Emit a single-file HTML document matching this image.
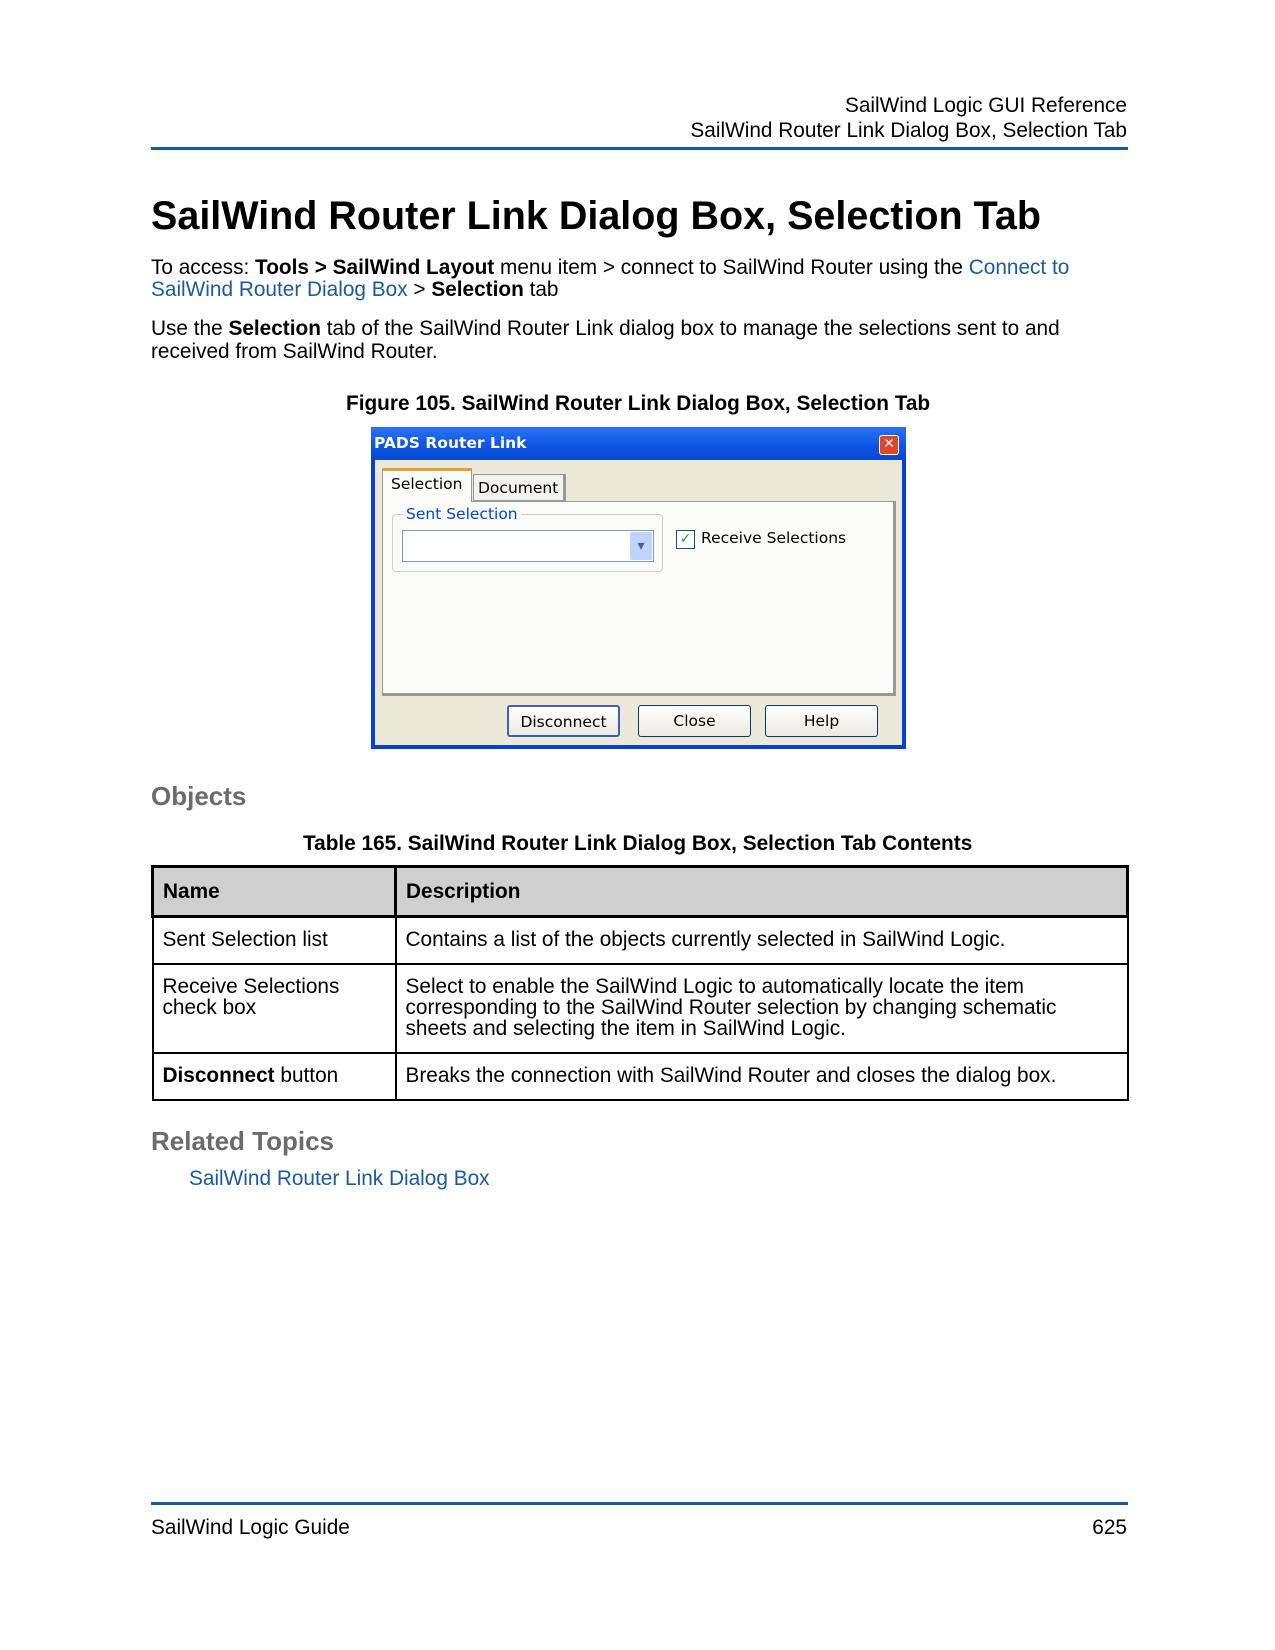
<!DOCTYPE html>
<html><head><meta charset="utf-8"><style>
body{margin:0;background:#fff;font-family:"Liberation Sans",Arial,sans-serif;color:#000}
.pg{position:relative;width:1275px;height:1650px;overflow:hidden}
.a{position:absolute;white-space:nowrap}
.lnk{color:#1a5a9e}
.t{font-size:20.8px}
.dlg{position:absolute;left:371px;top:427px;width:535px;height:322px;background:#0a3fd6;box-sizing:border-box}
.dlg *{position:absolute;box-sizing:border-box;font-family:"DejaVu Sans",sans-serif;white-space:nowrap}
.btn{top:278px;height:32px;border:1px solid #003c74;border-radius:3px;background:linear-gradient(#fff,#ece9e0);font-size:15.5px;text-align:center;line-height:30px;color:#000}
td{border:2px solid #000;padding:0 9px;vertical-align:top;font-size:20.8px}
</style></head><body><div class="pg">
<div class="a t" style="right:148px;top:94px">SailWind Logic GUI Reference</div>
<div class="a t" style="right:148px;top:119px">SailWind Router Link Dialog Box, Selection Tab</div>
<div class="a" style="left:151px;top:147px;width:977px;height:3px;background:#1a5a9e"></div>
<div class="a" style="left:151px;top:194px;font-size:39.5px;font-weight:bold">SailWind Router Link Dialog Box, Selection Tab</div>
<div class="a t" style="left:151px;top:256px">To access: <b>Tools &gt; SailWind Layout</b> menu item &gt; connect to SailWind Router using the <span class="lnk">Connect to</span></div>
<div class="a t" style="left:151px;top:278px"><span class="lnk">SailWind Router Dialog Box</span> &gt; <b>Selection</b> tab</div>
<div class="a t" style="left:151px;top:317px">Use the <b>Selection</b> tab of the SailWind Router Link dialog box to manage the selections sent to and</div>
<div class="a t" style="left:151px;top:340px">received from SailWind Router.</div>
<div class="a t" style="left:346px;top:392px;font-weight:bold">Figure 105. SailWind Router Link Dialog Box, Selection Tab</div>
<div class="dlg">
 <div style="left:0;top:0;width:535px;height:33px;background:linear-gradient(#2b72f2,#0b55e3 60%,#0a48d0)"></div>
 <div style="left:3px;top:7px;color:#fff;font-weight:bold;font-size:15.5px">PADS Router Link</div>
 <div style="left:508px;top:8px;width:20px;height:20px;background:#e0452a;border:1px solid #fff;border-radius:3px;color:#fff;font-size:14px;line-height:17px;text-align:center;font-weight:bold">✕</div>
 <div style="left:4px;top:33px;width:527px;height:285px;background:#ece9d8"></div>
 <div style="left:11px;top:74px;width:514px;height:195px;background:#fbfbf9;border:1px solid #919b9c;border-right:3px solid #9a9a90;border-bottom:3px solid #9a9a90"></div>
 <div style="left:11px;top:41px;width:90px;height:34px;background:#fbfbf9;border:1px solid #919b9c;border-bottom:none;border-top:3px solid #e0a040"></div>
 <div style="left:20px;top:48px;font-size:15.5px">Selection</div>
 <div style="left:102px;top:47px;width:93px;height:27px;background:#f4f3ee;border:1px solid #919b9c;border-right:3px solid #919b9c"></div>
 <div style="left:107px;top:52px;font-size:15.5px">Document</div>
 <div style="left:21px;top:87px;width:271px;height:58px;border:1px solid #d0d0bf;border-radius:4px"></div>
 <div style="left:32px;top:78px;background:#fbfbf9;padding:0 3px;font-size:15.5px;color:#0046d5">Sent Selection</div>
 <div style="left:31px;top:103px;width:252px;height:32px;border:1px solid #7f9db9;background:#fff"></div>
 <div style="left:259px;top:105px;width:22px;height:28px;background:#c1d3fb;border-radius:2px;color:#4d6185;font-size:14px;text-align:center;line-height:28px">▾</div>
 <div style="left:305px;top:103px;width:19px;height:19px;border:1px solid #1c5180;background:#fff;color:#21a121;font-size:14px;line-height:17px;text-align:center;font-weight:bold">✓</div>
 <div style="left:330px;top:102px;font-size:15.5px">Receive Selections</div>
 <div class="btn" style="left:136px;width:113px;border:2px solid #3c62b8">Disconnect</div>
 <div class="btn" style="left:267px;width:113px">Close</div>
 <div class="btn" style="left:394px;width:113px">Help</div>
</div>
<div class="a" style="left:151px;top:781px;font-size:26px;font-weight:bold;color:#6b6b6b">Objects</div>
<div class="a t" style="left:303px;top:832px;font-weight:bold">Table 165. SailWind Router Link Dialog Box, Selection Tab Contents</div>
<table class="a" style="left:151px;top:865px;width:978px;border-collapse:collapse">
<tr style="height:50px;background:#cfcfcf"><td style="width:222px;border-width:3px;vertical-align:middle"><b>Name</b></td><td style="border-width:3px;vertical-align:middle"><b>Description</b></td></tr>
<tr style="height:47px"><td style="vertical-align:middle">Sent Selection list</td><td style="vertical-align:middle">Contains a list of the objects currently selected in SailWind Logic.</td></tr>
<tr style="height:89px"><td style="padding-top:11px;line-height:21px">Receive Selections<br>check box</td><td style="padding-top:11px;line-height:21px">Select to enable the SailWind Logic to automatically locate the item<br>corresponding to the SailWind Router selection by changing schematic<br>sheets and selecting the item in SailWind Logic.</td></tr>
<tr style="height:47px"><td style="vertical-align:middle"><b>Disconnect</b> button</td><td style="vertical-align:middle">Breaks the connection with SailWind Router and closes the dialog box.</td></tr>
</table>
<div class="a" style="left:151px;top:1126px;font-size:26px;font-weight:bold;color:#6b6b6b">Related Topics</div>
<div class="a t lnk" style="left:189px;top:1167px">SailWind Router Link Dialog Box</div>
<div class="a" style="left:151px;top:1502px;width:977px;height:3px;background:#1a5a9e"></div>
<div class="a t" style="left:151px;top:1516px">SailWind Logic Guide</div>
<div class="a t" style="right:148px;top:1516px">625</div>
</div></body></html>
